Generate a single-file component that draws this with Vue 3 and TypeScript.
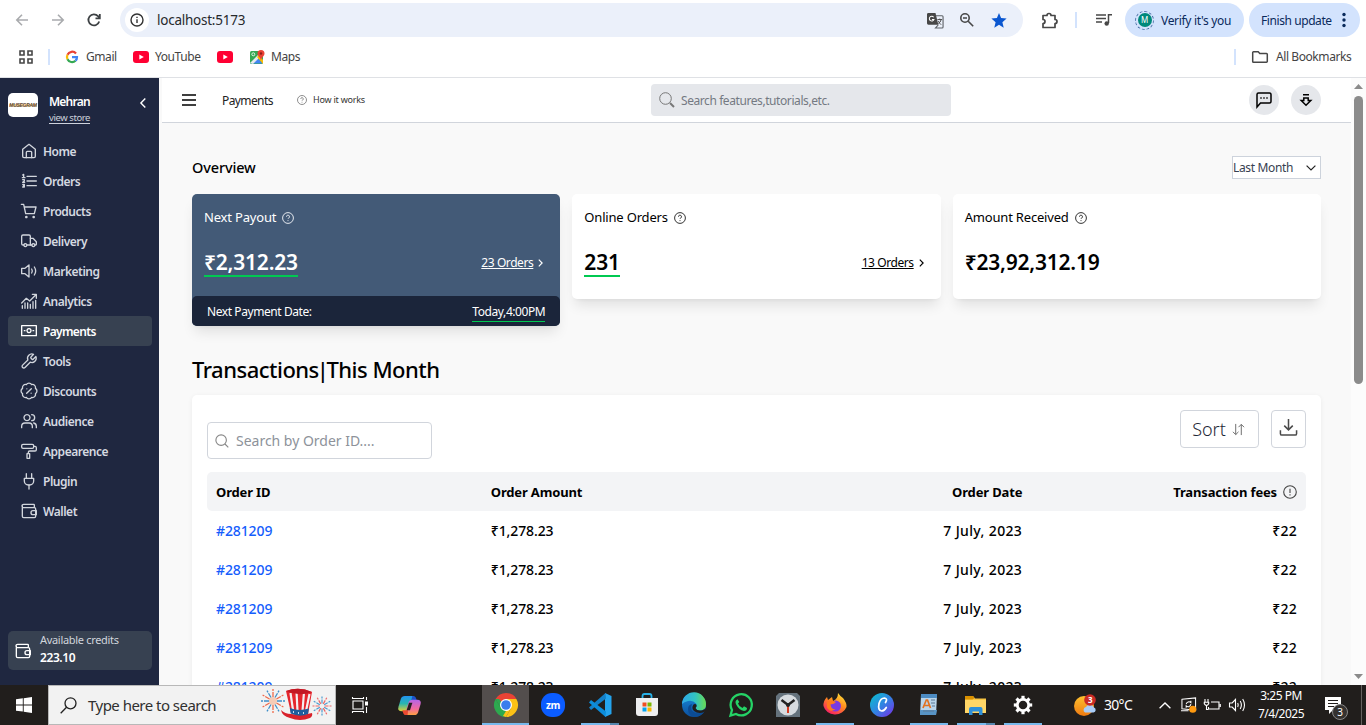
<script setup lang="ts">
interface NavItem {
  label: string
  paths: string[]
  active?: boolean
}

interface Task {
  name: string
  state?: 'open' | 'stack' | 'current'
}

const navItems: NavItem[] = [
  { label: 'Home', paths: ['M2.5 9.5 12 2l9.500 7.500V20a2 2 0 0 1-2 2h-15a2 2 0 0 1-2-2Z', 'M8 22v-8a1.500 1.500 0 0 1 1.500-1.500h5A1.500 1.500 0 0 1 16 14v8'] },
  { label: 'Orders', paths: ['M9 5h14M9 12h14M9 19h14', 'M2.500 3 4 2v5M2 7h4M2.500 10h2.500v2L2.500 14h3M2.500 17H5v4H2.500M3.500 19H5'] },
  { label: 'Products', paths: ['M.5 2H4l3 14h13l2.500-10H5', 'M8 20a1 1 0 1 0 .01 0M19 20a1 1 0 1 0 .01 0'] },
  { label: 'Delivery', paths: ['M14 18V5a2 2 0 0 0-2-2H3a2 2 0 0 0-2 2v11a2 2 0 0 0 2 2h1', 'M14 8h4l5 5v4a1 1 0 0 1-1 1h-1M9 18h7', 'M6.500 16a2.200 2.200 0 1 0 .01 0ZM18.500 16a2.200 2.200 0 1 0 .01 0Z'] },
  { label: 'Marketing', paths: ['M12 3v18l-6-5H1V8h5Z', 'M16 9q2 3 0 6M20 6q4 6 0 12'] },
  { label: 'Analytics', paths: ['M1 15 8 8l5 4 9-9M17 2h6v6', 'M2 19v4M6 15v8M10 15v8M14 17v6M18 13v10M22 11v12'] },
  { label: 'Payments', active: true, paths: ['M1 4h22v15H1Z', 'M12 8.500a3 3 0 1 0 .01 0ZM5 11.500h1M18 11.500h1'] },
  { label: 'Tools', paths: ['M15 6a1.300 1.300 0 0 0 0 1.800l1.500 1.500a1.300 1.300 0 0 0 1.800 0l4-4a6.500 6.500 0 0 1-8.500 8.500L6 21.800a2.500 2.500 0 0 1-3.600-3.600L10.300 10.500a6.500 6.500 0 0 1 8.500-8.500Z'] },
  { label: 'Discounts', paths: ['M2.300 8a4.700 4.700 0 0 1 5.700-5.700 4.700 4.700 0 0 1 8 0A4.700 4.700 0 0 1 21.700 8a4.700 4.700 0 0 1 0 8 4.700 4.700 0 0 1-5.700 5.700 4.700 4.700 0 0 1-8 0A4.700 4.700 0 0 1 2.300 16a4.700 4.700 0 0 1 0-8Z', 'M15.500 8.500l-7 7M8.800 8.800h.01M15.200 15.200h.01'] },
  { label: 'Audience', paths: ['M1 22v-2a5 5 0 0 1 5-5h6a5 5 0 0 1 5 5v2', 'M9 2.500a4.500 4.500 0 1 0 .01 0ZM16 2.500a4.500 4.500 0 0 1 0 9M19 15a5 5 0 0 1 4 5v2'] },
  { label: 'Appearence', paths: ['M3 2h14a2 2 0 0 1 2 2v2a2 2 0 0 1-2 2H3a2 2 0 0 1-2-2V4a2 2 0 0 1 2-2Z', 'M19 5h2a2 2 0 0 1 2 2v3a2 2 0 0 1-2 2h-8a2 2 0 0 0-2 2v1M9 16h4v7H9Z'] },
  { label: 'Plugin', paths: ['M8 1v7M16 1v7M12 18v6', 'M5 8h14v4a6 6 0 0 1-6 6h-2a6 6 0 0 1-6-6Z'] },
  { label: 'Wallet', paths: ['M20 6V3a1 1 0 0 0-1-1H4a2.500 2.500 0 0 0 0 5h16a2 2 0 0 1 2 2v11a2 2 0 0 1-2 2H4a2 2 0 0 1-2-2V4.500', 'M23 11.500h-5a3 3 0 0 0 0 6h5Z'] },
]

const orders = Array.from({ length: 5 }, () => ({
  id: '#281209',
  amount: '₹1,278.23',
  date: '7 July, 2023',
  fee: '₹22',
}))

const tasks: Task[] = [
  { name: 'chrome', state: 'current' },
  { name: 'zoom' },
  { name: 'code', state: 'stack' },
  { name: 'store' },
  { name: 'edge' },
  { name: 'whatsapp' },
  { name: 'clock' },
  { name: 'firefox', state: 'open' },
  { name: 'canva' },
  { name: 'wordpad', state: 'open' },
  { name: 'files', state: 'stack' },
  { name: 'settings', state: 'open' },
]

const rays = Array.from({ length: 12 }, (_, i) => i * 30)
const teeth = Array.from({ length: 8 }, (_, i) => i * 45)
</script>

<template>
  <div class="screen">
    <header class="browser">
      <div class="toolbar">
        <svg class="i-back" viewBox="0 0 12 12"><path d="M12 6H1M6 .8.8 6 6 11.200" /></svg>
        <svg class="i-forward" viewBox="0 0 12 12"><path d="M0 6h11M6 .8 11.200 6 6 11.200" /></svg>
        <svg class="i-reload" viewBox="0 0 14 14"><path d="M12.200 8.500A5.500 5.500 0 1 1 11 3.200L12.500 5" /><path d="M12.800 1v4.300H8.500" /></svg>
        <div class="omnibox">
          <span class="site-info">
            <svg viewBox="0 0 14 14"><circle cx="7" cy="7" r="6" /><path d="M7 6.300V10M7 3.700v1.300" /></svg>
          </span>
          <span class="url">localhost:5173</span>
          <svg class="i-translate" viewBox="0 0 18 18">
            <path d="M1.500 1H9l3 12.500H1.500A1.500 1.500 0 0 1 0 12V2.500A1.500 1.500 0 0 1 1.500 1Z" fill="#474747" />
            <path d="M9.500 4h6.500a1 1 0 0 1 1 1v11a1 1 0 0 1-1 1H9l3-3.500" fill="none" stroke="#5f6368" stroke-width="1.200" />
            <path d="M7 5.500A2.500 2.500 0 1 0 7.300 8H5.200" fill="none" stroke="#fff" stroke-width="1.100" />
            <path d="M11 8h5M13.500 7v1M15 8q-.7 3-3 4.500M12 9.500q1 2.500 3 4" fill="none" stroke="#474747" />
          </svg>
          <svg class="i-zoomout" viewBox="0 0 14 14"><circle cx="5" cy="5" r="4.200" /><path d="M8.200 8.200 13.200 13.200M3 5h4" /></svg>
          <svg class="i-star" viewBox="0 0 16 15"><path d="m8 0 2.100 5.100 5.500.5-4.200 3.600 1.300 5.500L8 11.800l-4.700 2.900 1.300-5.500L.4 5.600l5.500-.5Z" /></svg>
        </div>
        <svg class="i-puzzle" viewBox="0 0 17 17"><path d="M2 3.500h4a2 2 0 0 1 4 0h4v4a2 2 0 0 1 0 4v4H2v-4a2 2 0 0 0 0-4Z" /></svg>
        <span class="bar-divider"></span>
        <svg class="i-queue" viewBox="0 0 16 14"><path d="M0 2h10M0 5.500h10M0 9h6M12.500 10V1.800H16" /><circle cx="10.700" cy="10.500" r="2.200" /></svg>
        <button class="pill verify">
          <span class="avatar-ring"><span class="avatar">M</span></span>
          <span>Verify it's you</span>
        </button>
        <button class="pill finish">
          <span>Finish update</span>
          <svg viewBox="0 0 4 16"><circle cx="2" cy="2.500" r="1.700" /><circle cx="2" cy="8" r="1.700" /><circle cx="2" cy="13.500" r="1.700" /></svg>
        </button>
      </div>
      <div class="bookmarks">
        <svg class="i-apps" viewBox="0 0 14 14"><path d="M1 1h4v4H1ZM9 1h4v4H9ZM1 9h4v4H1ZM9 9h4v4H9Z" /></svg>
        <span class="bar-divider first"></span>
        <svg class="i-google" viewBox="0 0 24 24">
          <path d="M20 5A10.200 10.200 0 0 0 3 7.500" stroke="#ea4335" />
          <path d="M3 7.500a10 10 0 0 0 0 9" stroke="#fbbc04" />
          <path d="M3 16.500a10.200 10.200 0 0 0 16 3" stroke="#34a853" />
          <path d="M19 19.500a10 10 0 0 0 3-7.500H12" stroke="#4285f4" />
        </svg>
        <span class="bm gmail">Gmail</span>
        <svg class="i-youtube" viewBox="0 0 16 12"><rect width="16" height="12" rx="3" fill="#f03" /><path d="m6.300 3.500 4.500 2.500-4.500 2.500Z" fill="#fff" /></svg>
        <span class="bm youtube">YouTube</span>
        <svg class="i-youtube" viewBox="0 0 16 12"><rect width="16" height="12" rx="3" fill="#f03" /><path d="m6.300 3.500 4.500 2.500-4.500 2.500Z" fill="#fff" /></svg>
        <svg class="i-maps" viewBox="0 0 15 15">
          <rect y="1" width="13" height="13" rx="1.500" fill="#34a853" />
          <path d="m1 13.500 6-6 6 6Z" fill="#4285f4" /><path d="m0 13 11-11 2 2L3 14Z" fill="#e8eaed" /><path d="m7 7 2-2 4 5v4Z" fill="#fbbc04" />
          <circle cx="3.300" cy="4.300" r="1.500" fill="none" stroke="#fff" stroke-width=".8" />
          <path d="M11 0a3.500 3.500 0 0 1 3.500 3.500C14.500 6 11.500 7 11 10.500 10.500 7 7.500 6 7.500 3.500A3.500 3.500 0 0 1 11 0Z" fill="#ea4335" /><circle cx="11" cy="3.500" r="1.200" fill="#8c1d18" />
        </svg>
        <span class="bm maps">Maps</span>
        <span class="bar-divider last"></span>
        <svg class="i-folder" viewBox="0 0 16 12"><path d="M1.500.8h4.700l1.600 1.700h6.700a.8.8 0 0 1 .8.800v7.200a.8.8 0 0 1-.8.700h-13a.8.8 0 0 1-.8-.8V1.500a.7.7 0 0 1 .8-.7Z" /></svg>
        <span class="bm all">All Bookmarks</span>
      </div>
    </header>

    <div class="app">
      <aside class="sidebar">
        <div class="store">
          <span class="store-logo"><span>MUSEGRAM</span></span>
          <div class="store-text">
            <span class="store-name">Mehran</span>
            <a class="store-link">view store</a>
          </div>
          <svg class="i-collapse" viewBox="0 0 6 10"><path d="M5.300.5.9 5l4.400 4.500" /></svg>
        </div>
        <nav class="nav">
          <a v-for="item in navItems" :key="item.label" class="nav-item" :class="{ active: item.active }">
            <svg viewBox="0 0 24 24"><path v-for="d in item.paths" :key="d" :d="d" /></svg>
            <span>{{ item.label }}</span>
          </a>
        </nav>
        <div class="credits">
          <svg viewBox="0 0 24 24"><path v-for="d in navItems[12].paths" :key="d" :d="d" /></svg>
          <div class="credits-text">
            <div class="credits-label">Available credits</div>
            <div class="credits-value">223.10</div>
          </div>
        </div>
      </aside>

      <main class="main">
        <div class="topbar">
          <svg class="i-menu" viewBox="0 0 14 12"><path d="M0 1h14M0 6h14M0 11h14" /></svg>
          <span class="page-name">Payments</span>
          <svg class="help" viewBox="0 0 12 12"><circle cx="6" cy="6" r="5.400" /><path d="M4.500 4.700a1.500 1.500 0 1 1 2.200 1.300q-.7.400-.7 1M6 8.200v.9" /></svg>
          <span class="how">How it works</span>
          <div class="feature-search">
            <svg viewBox="0 0 16 16"><circle cx="6.500" cy="6.500" r="5.800" /><path class="handle" d="m11 11 4 4" /></svg>
            <span>Search features,tutorials,etc.</span>
          </div>
          <button class="round chat">
            <svg viewBox="0 0 16 16"><path d="M1 15V2.500A1.500 1.500 0 0 1 2.500 1h11A1.500 1.500 0 0 1 15 2.500v7a1.500 1.500 0 0 1-1.500 1.500H4.500Z" /><path d="M4.300 6h1.400M7.300 6h1.400M10.300 6h1.400" /></svg>
          </button>
          <button class="round">
            <svg viewBox="0 0 16 16"><path d="M5 2.800h6M5.800 6h4.400v2.500h2.600L8 13.300 3.200 8.500h2.600Z" /></svg>
          </button>
        </div>

        <div class="content">
          <div class="overview-head">
            <h2>Overview</h2>
            <div class="select">
              <span>Last Month</span>
              <svg viewBox="0 0 10 6"><path d="m.6.600 4.400 4.400L9.400.6" /></svg>
            </div>
          </div>

          <div class="cards">
            <section class="card payout">
              <div class="card-title">
                <span>Next Payout</span>
                <svg class="help" viewBox="0 0 12 12"><circle cx="6" cy="6" r="5.400" /><path d="M4.500 4.700a1.500 1.500 0 1 1 2.200 1.300q-.7.400-.7 1M6 8.200v.9" /></svg>
              </div>
              <div class="card-body">
                <span class="amount underlined">₹2,312.23</span>
                <span class="orders-link"><u>23 Orders</u><svg viewBox="0 0 5 8"><path d="m.8.700 3.300 3.300L.8 7.300" /></svg></span>
              </div>
              <div class="payout-date">
                <span class="date-label">Next Payment Date:</span>
                <span class="date-value">Today,4:00PM</span>
              </div>
            </section>
            <section class="card">
              <div class="card-title">
                <span>Online Orders</span>
                <svg class="help" viewBox="0 0 12 12"><circle cx="6" cy="6" r="5.400" /><path d="M4.500 4.700a1.500 1.500 0 1 1 2.200 1.300q-.7.400-.7 1M6 8.200v.9" /></svg>
              </div>
              <div class="card-body">
                <span class="amount underlined">231</span>
                <span class="orders-link"><u>13 Orders</u><svg viewBox="0 0 5 8"><path d="m.8.700 3.300 3.300L.8 7.300" /></svg></span>
              </div>
            </section>
            <section class="card">
              <div class="card-title">
                <span>Amount Received</span>
                <svg class="help" viewBox="0 0 12 12"><circle cx="6" cy="6" r="5.400" /><path d="M4.500 4.700a1.500 1.500 0 1 1 2.200 1.300q-.7.400-.7 1M6 8.200v.9" /></svg>
              </div>
              <div class="card-body">
                <span class="amount">₹23,92,312.19</span>
              </div>
            </section>
          </div>

          <h1>Transactions<span class="bar">|</span>This Month</h1>

          <section class="transactions">
            <div class="tools">
              <div class="order-search">
                <svg viewBox="0 0 16 16"><circle cx="7" cy="7" r="6" /><path d="m11.400 11.400 3.800 3.800" /></svg>
                <span>Search by Order ID....</span>
              </div>
              <button class="sort">
                <span>Sort</span>
                <svg viewBox="0 0 14 14"><path d="M4 1v11.500M1 9.500l3 3 3-3M10 13V1.500M7 4.500l3-3 3 3" /></svg>
              </button>
              <button class="download">
                <svg viewBox="0 0 20 20"><path d="M10 1v11.500M5.500 8l4.500 4.500L14.500 8M1.500 13v3.500a1.500 1.500 0 0 0 1.500 1.500h14a1.500 1.500 0 0 0 1.500-1.500V13" /></svg>
              </button>
            </div>
            <div class="row head">
              <span>Order ID</span>
              <span>Order Amount</span>
              <span class="right">Order Date</span>
              <span class="right">Transaction fees<svg viewBox="0 0 14 14"><circle cx="7" cy="7" r="6.300" /><path d="M7 3.700v4.300M7 9.300v1.200" /></svg></span>
            </div>
            <div v-for="(order, i) in orders" :key="i" class="row">
              <span class="order-id">{{ order.id }}</span>
              <span>{{ order.amount }}</span>
              <span class="right order-date">{{ order.date }}</span>
              <span class="right fee">{{ order.fee }}</span>
            </div>
          </section>
        </div>
      </main>

      <div class="scrollbar">
        <svg viewBox="0 0 9 5"><path d="M0 5 4.500 0 9 5Z" /></svg>
        <span class="thumb"></span>
        <svg viewBox="0 0 9 5"><path d="M0 0h9L4.500 5Z" /></svg>
      </div>
    </div>

    <footer class="taskbar">
      <span class="start">
        <svg viewBox="0 0 16 16"><path d="M0 2.300 6.800 1.300v6.200H0ZM7.700 1.200 16 0v7.500H7.700ZM0 8.400h6.800v6.200L0 13.700ZM7.700 8.400H16V16l-8.300-1.200Z" /></svg>
      </span>
      <div class="win-search">
        <svg class="i-search" viewBox="0 0 17 17"><circle cx="10.500" cy="6.300" r="5.500" /><path d="M6.500 10.300.7 16.200" /></svg>
        <span>Type here to search</span>
        <svg class="i-hat" viewBox="0 0 70 36">
          <g transform="translate(12 14)"><path v-for="(r, i) in rays" :key="r" d="M0-4v-8" :transform="`rotate(${r})`" :stroke="i % 2 ? '#3f8fc9' : '#ef6a4b'" stroke-width="1.300" stroke-dasharray="5 1 2" /><circle r="4" fill="#f7b090" opacity=".6" /></g>
          <g transform="translate(61 19)"><path v-for="(r, i) in rays" :key="r" d="M0-2.500v-7" :transform="`rotate(${r})`" :stroke="i % 2 ? '#e66' : '#4c9bd0'" stroke-width="1.200" stroke-dasharray="4 1 2" /></g>
          <path d="M20 23q4 4 10 4 12 2 21-1 1 3-2 5-10 4-20 0-8-2-9-8Z" fill="#d8222b" />
          <path d="M25 4q13-5 26 1l-4 22q-9 3-17-1Z" fill="#e5252c" />
          <path d="m29.500 6 2.500 17M35.500 5l1 19M43 5l-1.500 19M48.500 7 45 24" stroke="#f3eef0" stroke-width="2.200" />
          <path d="M25 4q13-5 26 1-13 5-26-1Z" fill="#c21824" />
          <path d="m28.800 21 .9 5.500q9 4 17.300.5l.9-5.500q-10 3-19.100-.5Z" fill="#1f5d9c" />
          <path d="M32 25h1M37 26h1M42 26h1" stroke="#fff" stroke-width="1.500" />
        </svg>
      </div>
      <span class="taskview">
        <svg viewBox="0 0 16 16"><path d="M1 4h10v8H1ZM.5 0v1.500h11V0M.5 16v-1.500h11V16M14.500 0v3M14.500 10v6" /><path d="M13 4.500h3v4h-3Z" fill="#fff" stroke="none" /></svg>
      </span>
      <span class="copilot">
        <svg viewBox="0 0 24 22">
          <defs>
            <linearGradient id="cpa" x1="0" y1="0" x2="0" y2="1"><stop stop-color="#2293f0" /><stop offset=".5" stop-color="#29b5b0" /><stop offset="1" stop-color="#e3cf34" /></linearGradient>
            <linearGradient id="cpb" x1="0" y1="0" x2="0" y2="1"><stop stop-color="#b563e9" /><stop offset=".6" stop-color="#f36a9c" /><stop offset="1" stop-color="#fda040" /></linearGradient>
          </defs>
          <path d="M7 1h8q2 0 1.300 2.500L13 14q-1 3-4 3H4q-5 0-3.500-5L3 4q1-3 4-3Z" fill="url(#cpa)" />
          <path d="M14 1h2q2 0 2.700 2l1 3h-6l1.300-5Z" fill="#1c52c9" />
          <path d="M17 21H9q-2 0-1.300-2.500L11 8q1-3 4-3h5q5 0 3.500 5L21 18q-1 3-4 3Z" fill="url(#cpb)" />
          <path d="M10 21H8q-2 0-2.500-2L4.500 16h6Z" fill="#ec4930" />
          <path d="m11.500 8-2.500 8h3.500L15 8Z" fill="#25201e" />
        </svg>
      </span>
      <div class="tasks">
        <span v-for="task in tasks" :key="task.name" class="task" :class="task.state">
          <svg v-if="task.name === 'chrome'" viewBox="0 0 24 24">
            <path d="M12 12 1.600 6A12 12 0 0 1 22.400 6H12Z" fill="#ea4335" />
            <path d="M12 12V6h10.400A12 12 0 0 1 12 24l5.200-9Z" fill="#fbc116" />
            <path d="M12 12v12A12 12 0 0 1 1.600 6l5.200 9Z" fill="#2da94f" />
            <path d="m17.200 15-5.200 9-3-1 3.600-6Z" fill="#fbc116" /><path d="M6.800 15 1.600 6h3.400l5 6Z" fill="#2da94f" />
            <circle cx="12" cy="12" r="6" fill="#fff" /><circle cx="12" cy="12" r="4.800" fill="#3b7ded" />
          </svg>
          <svg v-else-if="task.name === 'zoom'" viewBox="0 0 24 24">
            <rect width="24" height="24" rx="11" fill="#0b5cff" /><text x="12" y="15.500" text-anchor="middle" class="zm">zm</text>
          </svg>
          <svg v-else-if="task.name === 'code'" viewBox="0 0 24 24">
            <path d="m17 0 6.500 3v18L17 24Z" fill="#24a4ee" /><path d="M17.500 0 1 14.500 3 17 18 5.500Z" fill="#1380c8" /><path d="M17.500 24 1 9.500 3 7l15 11.500Z" fill="#0c8ddb" />
          </svg>
          <svg v-else-if="task.name === 'store'" viewBox="0 0 24 24">
            <path d="M7.500 6V3q0-2 2-2h5q2 0 2 2v3" fill="none" stroke="#27b1e8" stroke-width="1.800" />
            <path d="M1 5h22v15a3 3 0 0 1-3 3H4a3 3 0 0 1-3-3Z" fill="#eeeeef" />
            <path d="M7.500 9.500h4v4h-4Z" fill="#f04e23" /><path d="M12.500 9.500h4v4h-4Z" fill="#7db700" /><path d="M7.500 14.500h4v4h-4Z" fill="#05a3ee" /><path d="M12.500 14.500h4v4h-4Z" fill="#fcb800" />
          </svg>
          <svg v-else-if="task.name === 'edge'" viewBox="0 0 24 24">
            <defs>
              <linearGradient id="ega" x1="0" x2="1"><stop stop-color="#2ea8ea" /><stop offset=".55" stop-color="#32c4c2" /><stop offset="1" stop-color="#6adb51" /></linearGradient>
              <linearGradient id="egb" x1="0" y1="0" x2="0" y2="1"><stop stop-color="#1a8bdd" /><stop offset="1" stop-color="#0b4f9d" /></linearGradient>
            </defs>
            <circle cx="12" cy="12" r="12" fill="url(#egb)" />
            <path d="M0 11A12 12 0 0 1 24 11.500q0 5-5 6-5 .5-5.500-2.500 2-2 .5-4.500Q11 7 6 8q-4 1-6 3Z" fill="url(#ega)" />
            <path d="M10 11q-3 7 4 9 5 1 8.500-2l-.5 1.500Q18 24 12 24q-6-2-6-8 0-4 4-5Z" fill="#0c4b93" />
            <path d="M13.500 15q1.500 3.500 7 2.300L24 15.500 22.500 19q-6 2.500-10.500-1-3-3-.5-6.500 2-1 3 .5.500 1.500-1 3Z" fill="#211e1c" />
          </svg>
          <svg v-else-if="task.name === 'whatsapp'" viewBox="0 0 24 24">
            <path d="M1.500 22.500 3 17A10.600 10.600 0 1 1 7 21Z" fill="none" stroke="#25d366" stroke-width="2.300" />
            <path d="M8.500 6.300q-3 1.500-1.500 5 3 6 8 6.700 3 0 3-3l-3-1.700-1.500 1.700Q10 13.500 9 10.500l1.300-1.500Z" fill="#25d366" />
          </svg>
          <svg v-else-if="task.name === 'clock'" viewBox="0 0 24 24">
            <path d="M0 3 3 0h18l3 3v21H0Z" fill="#65727c" /><circle cx="12" cy="12" r="10.500" fill="#d7dbdf" />
            <path d="M5.500 7 12 12l6.500-5" fill="none" stroke="#222" stroke-width="2.500" /><path d="M12 12v8" stroke="#d83b21" stroke-width="2" /><circle cx="12" cy="12" r="2" fill="#222" />
          </svg>
          <svg v-else-if="task.name === 'firefox'" viewBox="0 0 24 24">
            <defs><linearGradient id="ffa" x1=".8" y1="0" x2=".2" y2="1"><stop stop-color="#ffe43a" /><stop offset=".45" stop-color="#ff8a1e" /><stop offset="1" stop-color="#f5156c" /></linearGradient></defs>
            <path d="M15 0q2 3 5 5 4 5 3.500 9A12 11 0 0 1 .5 13Q0 8 4 4l1 3 4-3 1 4q5-2 5-8Z" fill="url(#ffa)" />
            <circle cx="12.500" cy="13" r="5.500" fill="#7a3be0" /><path d="M4 9q4-3 9 0-3 3-5.500 2 0 5 5 5.500-6 3-8.500-2Z" fill="#ff7a1c" />
          </svg>
          <svg v-else-if="task.name === 'canva'" viewBox="0 0 24 24">
            <defs><linearGradient id="cva" x1="0" y1="0" x2="1" y2="1"><stop stop-color="#08c3cc" /><stop offset=".5" stop-color="#3084e2" /><stop offset="1" stop-color="#7d2ae8" /></linearGradient></defs>
            <circle cx="12" cy="12" r="12" fill="url(#cva)" /><path d="M15.500 9.500q2.500-4-1-4.500-4 0-5.500 5.500-1.300 7 2.500 7.500 2.800 0 4.800-3.500" fill="none" stroke="#fff" stroke-width="1.700" stroke-linecap="round" />
          </svg>
          <svg v-else-if="task.name === 'wordpad'" viewBox="0 0 24 24">
            <path d="M4 2h16l-1 20H3Z" fill="#b9d5eb" /><path d="M4 1h16v4H4Z" fill="#4d8cc3" /><path d="M3 17h17l-1 5H3Z" fill="#5894c5" />
            <path d="m6 15 3.300-8h1.200l3 8M7.200 12.500h5" fill="none" stroke="#e27221" stroke-width="1.700" /><path d="M14 7h4M14 10h4M15 13h3M6 18h11" stroke="#5d7994" />
          </svg>
          <svg v-else-if="task.name === 'files'" viewBox="0 0 24 24">
            <path d="M1 3h8l2 2.500h11V20H1Z" fill="#f9c644" /><path d="M1 3h8l1.500 2-2 1.500H1Z" fill="#d99000" /><path d="M1 7h21v13H1Z" fill="#ffd667" />
            <path d="M5 22v-6q0-2 2-2h9.500q2 0 2 2v6H15v-3.500H8.500V22Z" fill="#2d8fd9" />
          </svg>
          <svg v-else viewBox="0 0 24 24">
            <g transform="translate(12 12)"><circle r="5.700" fill="none" stroke="#fff" stroke-width="2.800" /><path v-for="t in teeth" :key="t" d="M-1.600-6h3.200v-3.200h-3.200Z" :transform="`rotate(${t})`" fill="#fff" /></g>
          </svg>
        </span>
      </div>
      <svg class="i-weather" viewBox="0 0 23 23">
        <defs><linearGradient id="sun" x1="0" y1="0" x2="0" y2="1"><stop stop-color="#ffc02e" /><stop offset="1" stop-color="#ee7a12" /></linearGradient></defs>
        <circle cx="10" cy="12" r="10" fill="url(#sun)" /><path d="M11 18.500a3 3 0 0 1 1-5.500 4.500 4.500 0 0 1 8 .5 2.600 2.600 0 0 1-.5 5Z" fill="#a9cdf8" />
        <circle cx="16" cy="6" r="5.800" fill="#c92b25" /><text x="16" y="9" text-anchor="middle">3</text>
      </svg>
      <span class="temp">30°C</span>
      <svg class="i-up" viewBox="0 0 12 7"><path d="M.6 6.300 6 1l5.400 5.300" /></svg>
      <svg class="i-sync" viewBox="0 0 17 17"><path d="M1 2.500 15.500 1v13L1 12.500ZM0 14.500h8M5.500 7.500a3 3 0 0 1 5-1.500V4M10.500 7.500a3 3 0 0 1-5 2v2" /><circle cx="12.500" cy="13" r="3.800" fill="#ff9a10" stroke="none" /></svg>
      <svg class="i-battery" viewBox="0 0 17 12"><path d="M7 3h8v7H4.500V8M16.300 5v3M1 0v3M4 0v3M.3 3.300h4.400v1.400L3.500 6.200h-2L.3 4.700ZM2.500 6v4.500h2" /></svg>
      <svg class="i-volume" viewBox="0 0 17 14"><path d="M.5 5v4h2.700L6.500 12.500v-11L3.200 5ZM8.700 5q1 2 0 4M11.200 3q2.400 4 0 8M13.700 1q3.600 6 0 12" /></svg>
      <div class="clock"><span>3:25 PM</span><span>7/4/2025</span></div>
      <span class="notify">
        <svg viewBox="0 0 16 17"><path d="M0 0h16v13H8l-4 4v-4H0Z" fill="#fff" /><path d="M3 3.500h10M3 6.500h10M3 9.500h6" stroke="#211e1c" /></svg>
        <span class="count">3</span>
      </span>
      <span class="show-desktop"></span>
    </footer>
  </div>
</template>

<style>
html,
body {
  margin: 0;
  overflow: hidden;
}
</style>

<style scoped>
* { box-sizing: border-box; }
.screen {
  width: 1366px;
  height: 725px;
  display: flex;
  flex-direction: column;
  overflow: hidden;
  font-family: "Noto Sans", "Open Sans", sans-serif;
  font-size: 12px;
  letter-spacing: -0.035em;
  white-space: nowrap;
  color: #000;
}
svg { display: block; flex: none; fill: none; overflow: visible; }
button { border: 0; padding: 0; font: inherit; letter-spacing: inherit; display: flex; align-items: center; }
h1, h2 { margin: 0; font-weight: 500; }

/* Browser chrome */
.browser { height: 78px; flex: none; background: #fff; border-bottom: 1px solid #dfe1e5; }
.toolbar { display: flex; align-items: center; height: 40px; }
.i-back, .i-forward { width: 12px; height: 12px; stroke: #a9abae; stroke-width: 1.600; }
.i-back { margin-left: 16px; }
.i-forward { margin-left: 24px; }
.i-reload { width: 14px; height: 14px; margin-left: 23px; stroke: #3c4043; stroke-width: 1.800; }
.omnibox { display: flex; align-items: center; width: 903px; height: 34px; margin-left: 19px; padding: 0 16px 0 5px; border-radius: 17px; background: #ebf0fa; }
.site-info { width: 24px; height: 24px; border-radius: 50%; background: #fff; display: flex; align-items: center; justify-content: center; }
.site-info svg { width: 14px; height: 14px; stroke: #333; stroke-width: 1.400; }
.url { margin-left: 8px; font-size: 13.500px; letter-spacing: -0.018em; color: #27292c; flex: 1; }
.i-translate { width: 17px; height: 17px; }
.i-zoomout { width: 14px; height: 14px; margin-left: 16px; stroke: #474747; stroke-width: 1.600; }
.i-star { width: 16px; height: 15px; margin-left: 17px; fill: #0b57d0; }
.i-puzzle { width: 17px; height: 17px; margin-left: 18px; stroke: #474747; stroke-width: 1.700; stroke-linejoin: round; }
.bar-divider { width: 2px; height: 16px; background: #d3e3fd; }
.toolbar .bar-divider { margin-left: 17px; }
.i-queue { width: 16px; height: 14px; margin-left: 19px; stroke: #474747; stroke-width: 1.500; }
.i-queue circle { fill: #474747; stroke: none; }
.pill { height: 34px; border-radius: 17px; background: #d3e3fd; color: #0a2a5c; font-size: 12px; }
.verify { width: 119px; margin-left: 13px; padding-left: 10px; gap: 7px; letter-spacing: -0.026em; }
.finish { width: 111px; margin-left: 5px; padding-left: 12px; }
.finish svg { width: 4px; height: 16px; margin-left: 10px; fill: #0a2a5c; }
.avatar-ring { width: 19px; height: 19px; border-radius: 50%; border: 1px dashed #4a6fa5; display: flex; align-items: center; justify-content: center; }
.avatar { width: 14px; height: 14px; flex: none; border-radius: 50%; background: #00897b; color: #fff; font-size: 8px; line-height: 14px; text-align: center; }
.bookmarks { display: flex; align-items: center; height: 34px; color: #444; }
.i-apps { width: 14px; height: 14px; margin-left: 19px; stroke: #474747; stroke-width: 1.600; }
.bar-divider.first { margin-left: 15px; }
.i-google { width: 12px; height: 12px; margin-left: 16px; stroke-width: 4.500; }
.bm { line-height: 16px; }
.gmail { width: 31px; margin-left: 8px; }
.i-youtube { width: 16px; height: 12px; margin-left: 16px; }
.youtube { width: 46px; margin-left: 6px; }
.i-maps { width: 15px; height: 15px; margin-left: 17px; }
.maps { margin-left: 6px; }
.bar-divider.last { margin-left: auto; }
.i-folder { width: 16px; height: 12px; margin-left: 16px; stroke: #474747; stroke-width: 1.500; }
.all { width: 76px; margin-left: 8px; margin-right: 14px; }

/* Application shell */
.app { display: flex; flex: none; height: 607px; overflow: hidden; background: #f9f9f9; }
.sidebar { width: 159px; flex: none; background: #1f2740; display: flex; flex-direction: column; padding: 0 7px 15px 8px; }
.store { display: flex; height: 58px; padding-top: 13px; }
.store-logo { width: 30px; height: 24px; margin-top: 2px; border-radius: 5px; background: #fff; display: flex; align-items: center; justify-content: center; }
.store-logo span { font: italic bold 5px "Liberation Sans", sans-serif; letter-spacing: -0.300px; color: #5d4a35; background: linear-gradient(#fff 25%, #f5cf9b 40%, #f5cf9b 70%, #fff 80%); }
.store-text { width: 83px; margin-left: 11px; display: flex; flex-direction: column; align-items: flex-start; }
.store-name { color: #fff; font-weight: 600; line-height: 21px; letter-spacing: -0.065em; }
.store-link { color: #cdd2dc; font-size: 9.500px; line-height: 11px; border-bottom: 1px solid #cdd2dc; }
.i-collapse { width: 6px; height: 10px; margin: 7px 0 0 8px; stroke: #fff; stroke-width: 1.400; }
.nav-item { display: flex; align-items: center; height: 30px; padding-left: 13px; gap: 6px; border-radius: 4px; color: #d5d9e0; font-weight: 600; font-size: 12px; letter-spacing: -0.040em; }
.nav-item svg { width: 16px; height: 16px; stroke: #d1d5dc; stroke-width: 2; stroke-linejoin: round; stroke-linecap: round; }
.nav-item.active { background: #374151; color: #fff; letter-spacing: -0.055em; }
.nav-item.active svg { stroke: #fff; }
.credits { display: flex; align-items: center; height: 39px; margin-top: auto; padding-left: 7px; gap: 9px; border-radius: 5px; background: #374151; }
.credits svg { width: 16px; height: 16px; stroke: #fff; stroke-width: 2; stroke-linejoin: round; }
.credits-text { margin-top: -2px; }
.credits-label { color: #d1d5dc; font-size: 11px; line-height: 16px; letter-spacing: -0.028em; }
.credits-value { color: #fff; font-weight: 600; line-height: 19px; }

.main { width: 1192px; padding-left: 3px; flex: none; }
.topbar { display: flex; align-items: center; height: 45px; background: #fff; border-bottom: 1px solid #d1d5dc; padding-left: 20px; }
.i-menu { width: 14px; height: 12px; stroke: #000; stroke-width: 1.700; }
.page-name { width: 52px; margin-left: 26px; color: #222; font-size: 12px; letter-spacing: -0.050em; }
.help { width: 12px; height: 12px; stroke: #333; stroke-width: 1; }
.topbar .help { width: 10px; height: 10px; margin-left: 23px; stroke: #777; }
.how { width: 54px; margin-left: 6px; margin-right: auto; padding-bottom: 1px; font-size: 9px; letter-spacing: -0.025em; color: #333; }
.feature-search { display: flex; align-items: center; width: 300px; height: 32px; margin-right: 298px; padding-left: 8px; border-radius: 4px; background: #e5e7eb; color: #747982; }
.feature-search svg { width: 16px; height: 16px; margin-right: 6px; stroke: #777; }
.handle { stroke-width: 2; }
.round { width: 30px; height: 30px; border-radius: 50%; background: #e5e7eb; justify-content: center; margin-right: 30px; }
.round svg { width: 16px; height: 16px; stroke: #000; stroke-width: 1.500; }
.chat { margin-right: 12px; }
.content { padding: 33px 30px 0; }
.overview-head { display: flex; justify-content: space-between; align-items: center; height: 23px; }
h2 { font-size: 14.500px; line-height: 20px; letter-spacing: -0.010em; padding-bottom: 2px; }
.select { display: flex; align-items: center; justify-content: space-between; width: 89px; height: 23px; padding: 0 4px 0 0; border: 1px solid #cdd3dc; background: #fff; color: #374151; letter-spacing: -0.028em; }
.select svg { width: 10px; height: 6px; stroke: #222; stroke-width: 1.200; }
.cards { display: grid; grid-template-columns: repeat(3, 1fr); align-items: start; gap: 12px; margin-top: 15px; }
.card { height: 105px; border-radius: 5px; background: #fff; box-shadow: 0 9px 13px -3px rgb(0 0 0 / 10%), 0 3px 5px -4px rgb(0 0 0 / 10%); }
.card-title { display: flex; align-items: center; gap: 6px; padding: 12px 12px 0; height: 34px; font-size: 13px; letter-spacing: -0.014em; }
.card-title .help { margin-top: 2px; }
.card-body { display: flex; align-items: center; justify-content: space-between; height: 68px; padding: 0 17px 0 12px; }
.amount { font-size: 21px; line-height: 24px; font-weight: 600; letter-spacing: -0.010em; padding-bottom: 1px; border-bottom: 2px solid transparent; margin-top: 3px; }
.underlined { border-color: #00c951; }
.orders-link { display: flex; align-items: center; gap: 5px; font-size: 12px; }
.orders-link u { text-underline-offset: 1px; }
.orders-link svg { width: 5px; height: 8px; margin-top: 1px; stroke: currentColor; stroke-width: 1.200; }
.payout { height: 132px; background: #435a77; color: #fff; }
.payout .help { stroke: #e4e8ee; }
.payout-date { display: flex; justify-content: space-between; align-items: center; height: 30px; padding: 0 15px; border-radius: 5px; background: #1b253a; }
.date-label { line-height: 17px; }
.date-value { line-height: 17px; padding-bottom: 1px; border-bottom: 1px solid #00c951; margin-top: 3px; }
h1 { margin-top: 30px; font-size: 22px; line-height: 26px; letter-spacing: -0.023em; }
.bar { margin: 0 -2px; }
.transactions { margin-top: 13px; padding: 15px 15px 0; border-radius: 5px; background: #fff; box-shadow: 0 1px 5px rgb(0 0 0 / 6%); }
.tools { display: flex; height: 62px; }
.order-search { display: flex; align-items: center; width: 225px; height: 37px; margin-top: 12px; margin-right: auto; padding-left: 7px; border: 1px solid #d1d5dc; border-radius: 4px; color: #8d929a; font-size: 14px; letter-spacing: -0.001em; }
.order-search svg { width: 14px; height: 14px; margin-right: 7px; stroke: #888; stroke-width: 1.300; }
.sort, .download { height: 38px; border: 1px solid #d1d5dc; border-radius: 4px; background: #fff; }
.sort { width: 79px; padding-left: 11px; gap: 6px; color: #1f2937; font-size: 18px; font-weight: 300; letter-spacing: 0; }
.sort span { width: 34px; }
.sort svg { width: 13px; height: 13px; stroke: #666; stroke-width: 1; }
.download { width: 35px; margin-left: 12px; justify-content: center; }
.download svg { width: 19px; height: 19px; margin-bottom: 3px; stroke: #4b4b4b; stroke-width: 1.600; }
.row { display: grid; grid-template-columns: repeat(4, 1fr); height: 39px; align-items: center; font-size: 14px; font-weight: 500; letter-spacing: -0.008em; }
.row > span { padding: 0 9px; }
.row.head { border-radius: 5px; background: #f3f4f6; font-size: 13px; font-weight: 700; letter-spacing: -0.012em; }
.row .right { display: flex; align-items: center; justify-content: flex-end; gap: 6px; }
.row .right svg { width: 14px; height: 14px; stroke: #444; stroke-width: 1.100; }
.order-id { color: #155dfc; }
.row .order-date { letter-spacing: 0.026em; }
.row .fee { letter-spacing: 0.016em; }
.scrollbar { width: 15px; flex: none; display: flex; flex-direction: column; align-items: center; justify-content: space-between; padding: 6px 0; background: #fcfcfc; }
.scrollbar svg { width: 9px; height: 5px; fill: #8b8b8b; }
.thumb { width: 9px; height: 288px; margin-top: 7px; margin-bottom: auto; border-radius: 5px; background: #8b8b8b; }

/* Windows taskbar */
.taskbar { display: flex; align-items: center; flex: none; height: 40px; background: #211e1c; color: #fff; }
.start { width: 48px; padding-left: 16px; }
.start svg { width: 16px; height: 16px; fill: #fff; }
.win-search { display: flex; align-items: center; width: 288px; height: 40px; padding-left: 11px; background: #f2f2f2; border: 1px solid #b8b8b8; color: #303030; font-size: 15px; letter-spacing: -0.035em; }
.i-search { width: 17px; height: 17px; margin-right: 11px; stroke: #222; stroke-width: 1.300; }
.i-hat { width: 70px; height: 36px; margin-left: auto; margin-right: 4px; }
.taskview { margin-left: 16px; width: 16px; }
.taskview svg { width: 16px; height: 16px; stroke: #fff; stroke-width: 1.100; }
.copilot { margin-left: 30px; width: 23px; }
.copilot svg { width: 23px; height: 21px; }
.tasks { display: flex; margin-left: 61px; }
.task { position: relative; width: 47px; height: 40px; display: flex; align-items: center; justify-content: center; }
.task svg { width: 24px; height: 24px; }
.task.current { background: #534e4d; }
.task.open::after, .task.stack::after, .task.current::after { content: ""; position: absolute; left: 5px; right: 4px; bottom: 0; height: 2px; background: #76b9ed; }
.task.current::after { left: 0; right: 0; }
.task.stack::after { background: linear-gradient(90deg, #76b9ed 76%, #5586ad 76%); }
.zm { font: bold 10px "Open Sans", sans-serif; fill: #fff; }
.i-weather { width: 23px; height: 23px; margin-left: 28px; }
.i-weather text { font: bold 8px "Noto Sans", sans-serif; fill: #fff; }
.temp { width: 30px; margin-left: 7px; padding-bottom: 1px; font-size: 14px; letter-spacing: -0.050em; }
.i-up { width: 12px; height: 7px; margin-left: 25px; stroke: #fff; stroke-width: 1.300; }
.i-sync { width: 16px; height: 16px; margin-left: 10px; stroke: #fff; stroke-width: 1.100; }
.i-battery { width: 17px; height: 12px; margin-left: 7px; stroke: #fff; stroke-width: 1.100; }
.i-volume { width: 17px; height: 14px; margin-left: 8px; stroke: #fff; stroke-width: 1.100; }
.clock { width: 56px; margin-left: 7px; display: flex; flex-direction: column; align-items: center; font-size: 12px; line-height: 18px; letter-spacing: -0.042em; }
.notify { position: relative; width: 16px; height: 17px; margin-left: 16px; }
.notify svg { width: 16px; height: 17px; }
.count { position: absolute; left: 7px; top: 7px; width: 16px; height: 16px; border-radius: 50%; border: 1px solid #888; background: #353230; font-size: 10px; line-height: 14px; text-align: center; }
.show-desktop { width: 1px; height: 40px; margin-left: 20px; background: #65615f; }
</style>
